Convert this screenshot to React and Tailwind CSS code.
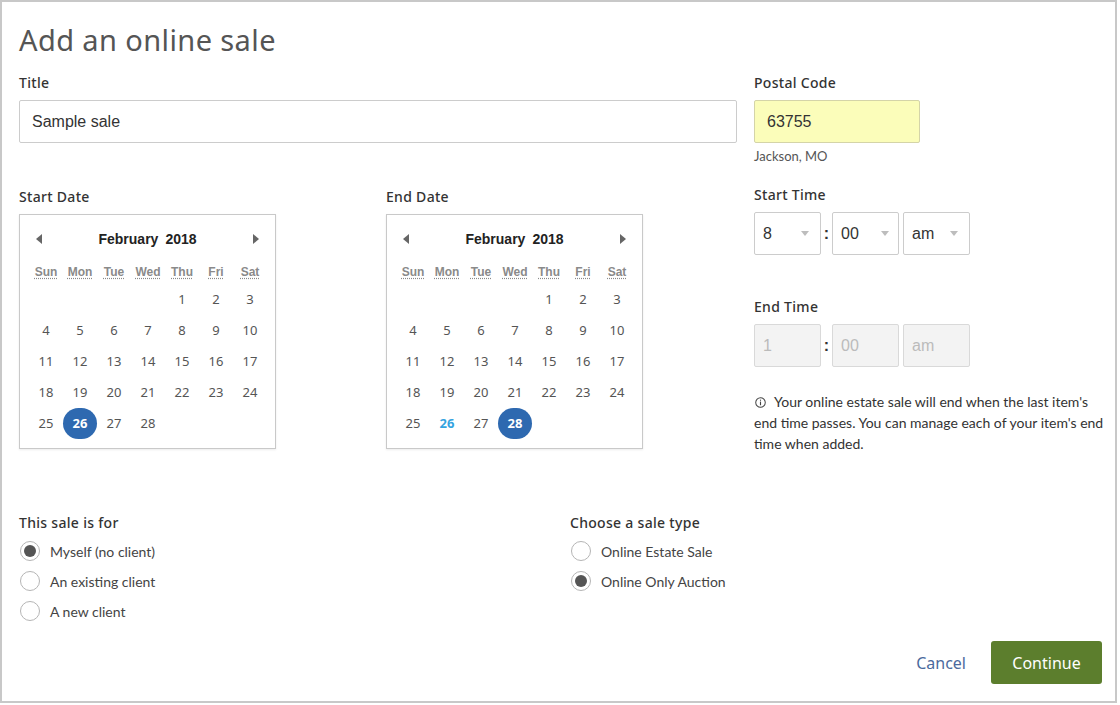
import React from "react";

const HEAD = { fontFamily: '"Noto Sans", "Open Sans", sans-serif' };
const BODY = { fontFamily: 'Lato, "Noto Sans", sans-serif' };
const ARIAL = { fontFamily: '"Liberation Sans", Arial, sans-serif' };

const DAYS = ["Sun", "Mon", "Tue", "Wed", "Thu", "Fri", "Sat"];
// Feb 2018 starts on Thursday
const CELLS = [
  null, null, null, null, 1, 2, 3,
  4, 5, 6, 7, 8, 9, 10,
  11, 12, 13, 14, 15, 16, 17,
  18, 19, 20, 21, 22, 23, 24,
  25, 26, 27, 28, null, null, null,
];

function Label({ children, className = "" }) {
  return (
    <div className={"text-[14px] leading-[20px] font-medium tracking-[0.3px] text-[#333] " + className} style={HEAD}>
      {children}
    </div>
  );
}

function Calendar({ selected, marked }) {
  return (
    <div className="w-[257px] h-[235px] border border-[#c9c9c9] shadow-[0_1px_2px_rgba(0,0,0,0.08)] bg-white pt-[9px] px-[9px]">
      <div className="h-[30px] flex items-center justify-between px-[7px]">
        <svg width="6" height="10" viewBox="0 0 6 10"><path d="M6 0 L0 5 L6 10 Z" fill="#666" /></svg>
        <span className="text-[14px] font-bold text-[#222]" style={ARIAL}>
          February<span className="inline-block w-[7px]" />2018
        </span>
        <svg width="6" height="10" viewBox="0 0 6 10"><path d="M0 0 L6 5 L0 10 Z" fill="#666" /></svg>
      </div>
      <div className="grid grid-cols-[repeat(7,34px)] mt-[6px]">
        {DAYS.map((d) => (
          <div key={d} className="h-[24px] flex items-center justify-center">
            <span className="text-[12px] font-bold text-[#8a8a8a] underline decoration-dotted underline-offset-2" style={ARIAL}>
              {d}
            </span>
          </div>
        ))}
        {CELLS.map((n, i) => (
          <div key={i} className="h-[31px] flex items-center justify-center">
            {n === selected ? (
              <span className="w-[35px] h-[31px] rounded-full bg-[#2e69b0] text-white font-bold text-[13px] flex items-center justify-center" style={HEAD}>
                {n}
              </span>
            ) : n === marked ? (
              <span className="text-[13px] font-bold text-[#34a3e0]" style={HEAD}>{n}</span>
            ) : (
              <span className="text-[13px] text-[#555]" style={HEAD}>{n}</span>
            )}
          </div>
        ))}
      </div>
    </div>
  );
}

function Caret() {
  return (
    <svg width="8" height="5" viewBox="0 0 8 5"><path d="M0 0 L8 0 L4 5 Z" fill="#bdbdbd" /></svg>
  );
}

function TimeBox({ value, disabled, caretLeft }) {
  return (
    <div
      className={
        "w-[67px] h-[43px] border rounded-[2px] flex items-center pl-[8px] text-[16px] " +
        (disabled ? "bg-[#f3f3f3] border-[#d9d9d9] text-[#bbb]" : "bg-white border-[#ccc] text-[#333]")
      }
      style={ARIAL}
    >
      <span className={caretLeft}>{value}</span>
      {!disabled && <Caret />}
    </div>
  );
}

function TimeRow({ h, m, ap, disabled }) {
  return (
    <div className="flex items-center">
      <TimeBox value={h} disabled={disabled} caretLeft="w-[38px]" />
      <span className="w-[11px] text-center text-[16px] font-bold text-[#333]" style={ARIAL}>:</span>
      <TimeBox value={m} disabled={disabled} caretLeft="w-[40px]" />
      <div className="w-[4px]" />
      <TimeBox value={ap} disabled={disabled} caretLeft="w-[38px]" />
    </div>
  );
}

function Radio({ checked, children }) {
  return (
    <label className="h-[30px] flex items-center gap-[10px]">
      <span className="w-[20px] h-[20px] rounded-full border border-[#b5b5b5] bg-white flex items-center justify-center shrink-0">
        {checked && <span className="w-[12px] h-[12px] rounded-full bg-[#555]" />}
      </span>
      <span className="text-[14px] text-[#444]" style={BODY}>{children}</span>
    </label>
  );
}

export default function App() {
  return (
    <div className="w-[1117px] h-[703px] border-2 border-[#c8c8c8] bg-white relative">
      <div className="pl-[17px] pt-[21px]">
        <div className="grid grid-cols-[351px_351px_351px] gap-x-[16px]">
          <div className="col-span-2">
            <h1 className="text-[29px] leading-[34px] tracking-[0.4px] text-[#555]" style={HEAD}>Add an online sale</h1>
            <Label className="mt-[16px]">Title</Label>
            <div className="mt-[7px] h-[43px] border border-[#ccc] rounded-[2px] flex items-center pl-[12px] text-[16px] text-[#333]" style={ARIAL}>
              Sample sale
            </div>
            <div className="grid grid-cols-[351px_351px] gap-x-[16px] mt-[44px]">
              <div>
                <Label>Start Date</Label>
                <div className="mt-[7px]"><Calendar selected={26} /></div>
              </div>
              <div>
                <Label>End Date</Label>
                <div className="mt-[7px]"><Calendar selected={28} marked={26} /></div>
              </div>
            </div>
          </div>

          <div className="pt-[50px] pl-[1px]">
            <Label>Postal Code</Label>
            <div className="mt-[7px] w-[166px] h-[43px] border border-[#d4d4a8] bg-[#fbfdba] rounded-[2px] flex items-center pl-[12px] text-[16px] text-[#333]" style={ARIAL}>
              63755
            </div>
            <div className="mt-[4px] text-[13px] leading-[18px] text-[#555]" style={BODY}>Jackson, MO</div>
            <Label className="mt-[20px]">Start Time</Label>
            <div className="mt-[7px]"><TimeRow h="8" m="00" ap="am" /></div>
            <Label className="mt-[42px]">End Time</Label>
            <div className="mt-[7px]"><TimeRow h="1" m="00" ap="am" disabled /></div>
            <p className="mt-[24px] w-[350px] text-[14px] leading-[21px] text-[#333]" style={BODY}>
              <svg className="inline-block align-[-1px] mr-[8px] ml-[1px]" width="11" height="11" viewBox="0 0 12 12">
                <circle cx="6" cy="6" r="5.2" fill="none" stroke="#444" strokeWidth="1.1" />
                <rect x="5.4" y="5" width="1.2" height="4" fill="#444" />
                <rect x="5.4" y="2.9" width="1.2" height="1.2" fill="#444" />
              </svg>
              Your online estate sale will end when the last item's end time passes. You can manage each of your item's end time when added.
            </p>
          </div>
        </div>

        <div className="flex mt-[59px]">
          <div className="w-[551px]">
            <Label>This sale is for</Label>
            <div className="mt-[3px] ml-[1px]">
              <Radio checked>Myself (no client)</Radio>
              <Radio>An existing client</Radio>
              <Radio>A new client</Radio>
            </div>
          </div>
          <div>
            <Label>Choose a sale type</Label>
            <div className="mt-[3px] ml-[1px]">
              <Radio>Online Estate Sale</Radio>
              <Radio checked>Online Only Auction</Radio>
            </div>
          </div>
        </div>

        <div className="flex items-center justify-end pr-[13px] mt-[15px] gap-[25px]">
          <span className="text-[16px] text-[#4b6a9d]" style={HEAD}>Cancel</span>
          <button className="w-[111px] h-[43px] rounded-[3px] bg-[#5c7e2d] text-white text-[16px]" style={HEAD}>
            Continue
          </button>
        </div>
      </div>
    </div>
  );
}
